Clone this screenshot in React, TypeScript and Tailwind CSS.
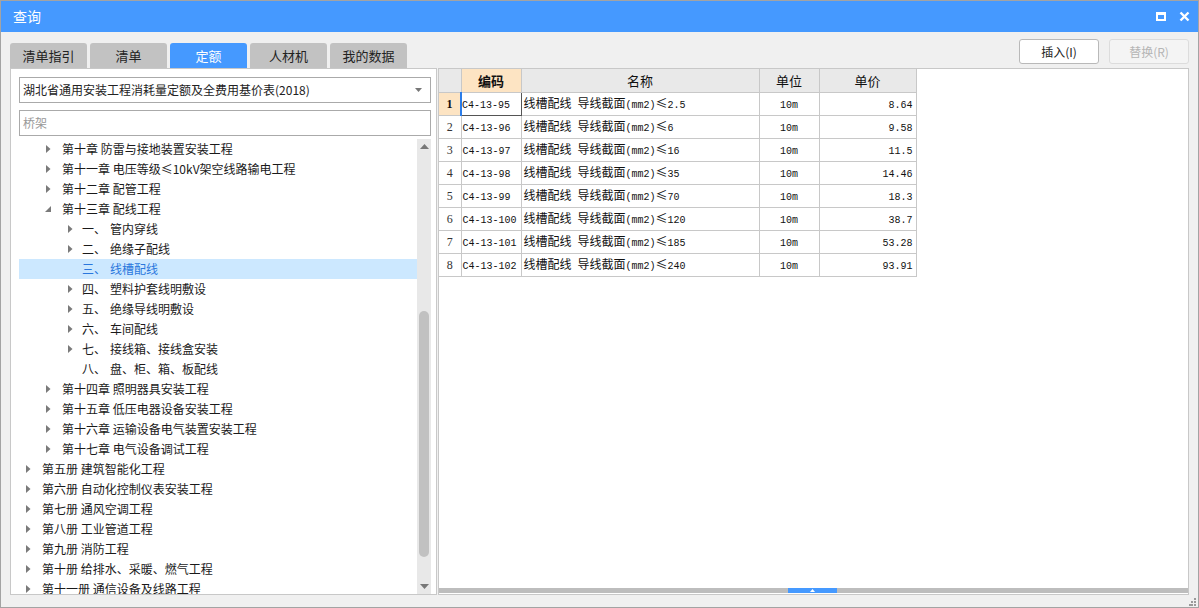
import React from "react";

type Node = { level: number; text: string; sub?: string; arrow?: "right" | "down"; selected?: boolean };

const tree: Node[] = [
  { level: 1, text: "第十章 防雷与接地装置安装工程", arrow: "right" },
  { level: 1, text: "第十一章 电压等级≤10kV架空线路输电工程", arrow: "right" },
  { level: 1, text: "第十二章 配管工程", arrow: "right" },
  { level: 1, text: "第十三章 配线工程", arrow: "down" },
  { level: 2, text: "一、", sub: "管内穿线", arrow: "right" },
  { level: 2, text: "二、", sub: "绝缘子配线", arrow: "right" },
  { level: 2, text: "三、", sub: "线槽配线", selected: true },
  { level: 2, text: "四、", sub: "塑料护套线明敷设", arrow: "right" },
  { level: 2, text: "五、", sub: "绝缘导线明敷设", arrow: "right" },
  { level: 2, text: "六、", sub: "车间配线", arrow: "right" },
  { level: 2, text: "七、", sub: "接线箱、接线盒安装", arrow: "right" },
  { level: 2, text: "八、", sub: "盘、柜、箱、板配线" },
  { level: 1, text: "第十四章 照明器具安装工程", arrow: "right" },
  { level: 1, text: "第十五章 低压电器设备安装工程", arrow: "right" },
  { level: 1, text: "第十六章 运输设备电气装置安装工程", arrow: "right" },
  { level: 1, text: "第十七章 电气设备调试工程", arrow: "right" },
  { level: 0, text: "第五册 建筑智能化工程", arrow: "right" },
  { level: 0, text: "第六册 自动化控制仪表安装工程", arrow: "right" },
  { level: 0, text: "第七册 通风空调工程", arrow: "right" },
  { level: 0, text: "第八册 工业管道工程", arrow: "right" },
  { level: 0, text: "第九册 消防工程", arrow: "right" },
  { level: 0, text: "第十册 给排水、采暖、燃气工程", arrow: "right" },
  { level: 0, text: "第十一册 通信设备及线路工程", arrow: "right" },
];

const rows = [
  ["C4-13-95", "2.5", "8.64"],
  ["C4-13-96", "6", "9.58"],
  ["C4-13-97", "16", "11.5"],
  ["C4-13-98", "35", "14.46"],
  ["C4-13-99", "70", "18.3"],
  ["C4-13-100", "120", "38.7"],
  ["C4-13-101", "185", "53.28"],
  ["C4-13-102", "240", "93.91"],
];

const tabs = ["清单指引", "清单", "定额", "人材机", "我的数据"];

const ui = { fontFamily: '"Noto Sans CJK SC", "Noto Sans", sans-serif' };
const cjk = { fontFamily: '"Noto Sans CJK SC", sans-serif' };
const mono = { fontFamily: '"Liberation Mono", monospace' };

// SimSun-like mix: ascii half width, CJK full width
const Mixed = ({ text }: { text: string }) => {
  const parts = text.match(/[\x00-\x7f]+|[^\x00-\x7f]+/g) || [];
  return (
    <>
      {parts.map((p, i) =>
        /^[\x00-\x7f]+$/.test(p) ? (
          <span key={i} style={mono} className="text-[10px] text-[#111]">{p.replace(/ /g, "\u00a0")}</span>
        ) : (
          <span key={i} style={cjk} className="text-[12px] text-[#111]">{p}</span>
        )
      )}
    </>
  );
};

const Arrow = ({ dir }: { dir?: "right" | "down" }) => {
  if (dir === "right")
    return (
      <svg width="5" height="8" viewBox="0 0 5 8"><path d="M0 0 L4.5 4 L0 8 Z" fill="#7a7a7a" /></svg>
    );
  if (dir === "down")
    return (
      <svg width="6" height="6" viewBox="0 0 6 6"><path d="M6 0 L6 6 L0 6 Z" fill="#7a7a7a" /></svg>
    );
  return <span className="w-[5px]" />;
};

export default function App() {
  return (
    <div style={ui} className="w-[1199px] h-[608px] border border-[#a3a3a3] bg-[#f0f0f0] flex flex-col relative overflow-hidden">
      <div className="h-[31px] bg-[#4599ff] flex items-center justify-between pl-[12px] pr-[8px] text-white">
        <span className="text-[14px]">查询</span>
        <div className="flex items-center gap-[13px]">
          <div className="w-[10px] h-[9px] border-[2px] border-t-[3px] border-white" />
          <svg width="11" height="11" viewBox="0 0 11 11">
            <path d="M1.5 1.5 L9.5 9.5 M9.5 1.5 L1.5 9.5" stroke="white" strokeWidth="2.4" />
          </svg>
        </div>
      </div>

      <div className="flex items-start justify-between h-[36px] px-[9px]">
        <div className="flex gap-[3px] mt-[11px]">
          {tabs.map((t) => (
            <div
              key={t}
              className={
                t === "定额"
                  ? "w-[77px] h-[25px] rounded-t-[3px] bg-[#4599ff] text-white text-[13px] flex items-center justify-center"
                  : "w-[77px] h-[25px] rounded-t-[3px] bg-[#c2c2c2] text-[#222] text-[13px] flex items-center justify-center"
              }
            >
              {t}
            </div>
          ))}
        </div>
        <div className="flex gap-[10px] mt-[7px]">
          <div className="w-[80px] h-[25px] rounded-[3px] border border-[#b9b9b9] bg-white text-[12px] text-[#222] flex items-center justify-center">
            插入(I)
          </div>
          <div className="w-[80px] h-[25px] rounded-[3px] border border-[#dcdcdc] bg-[#f4f4f4] text-[12px] text-[#b5b5b5] flex items-center justify-center">
            替换(R)
          </div>
        </div>
      </div>

      <div className="flex h-[527px] px-[9px] gap-[1px]">
        <div className="w-[427px] border border-[#c8c8c8] bg-white flex flex-col pt-[8px] pl-[8px] pr-[5px]">
          <div className="h-[26px] border border-[#aaaaaa] flex items-center justify-between pl-[3px] pr-[8px] text-[12px] text-[#222]">
            <span>湖北省通用安装工程消耗量定额及全费用基价表(2018)</span>
            <svg width="7" height="4" viewBox="0 0 7 4"><path d="M0 0 L7 0 L3.5 4 Z" fill="#777" /></svg>
          </div>
          <div className="h-[26px] border border-[#aaaaaa] mt-[7px] flex items-center pl-[3px] text-[12px] text-[#999]">
            桥架
          </div>
          <div className="flex flex-1 mt-[3px] min-h-0 overflow-hidden">
            <div className="flex-1 overflow-hidden">
              {tree.map((n, i) => (
                <div
                  key={i}
                  className={
                    n.selected
                      ? "h-[20px] flex items-center bg-[#cce8ff] text-[#2a77dd] text-[12px]"
                      : "h-[20px] flex items-center text-[#1a1a1a] text-[12px]"
                  }
                >
                  <div
                    className={
                      n.level === 0
                        ? "w-[23px] flex justify-end pr-[11px]"
                        : n.level === 1
                        ? "w-[43px] flex justify-end pr-[11px]"
                        : "w-[63px] flex justify-end pr-[9px]"
                    }
                  >
                    <Arrow dir={n.arrow} />
                  </div>
                  <span className="whitespace-nowrap">{n.text}</span>
                  {n.sub && <span className="whitespace-nowrap ml-[4px]">{n.sub}</span>}
                </div>
              ))}
            </div>
            <div className="w-[14px] bg-[#e8e8e8] flex flex-col items-center py-[5px]">
              <svg width="9" height="5" viewBox="0 0 9 5"><path d="M0 5 L4.5 0 L9 5 Z" fill="#777" /></svg>
              <div className="h-[162px]" />
              <div className="w-[10px] h-[246px] rounded-full bg-[#c1c1c1]" />
              <div className="flex-1" />
              <svg width="9" height="5" viewBox="0 0 9 5"><path d="M0 0 L9 0 L4.5 5 Z" fill="#777" /></svg>
            </div>
          </div>
        </div>

        <div className="flex-1 border border-[#c8c8c8] bg-white flex flex-col">
          <table className="border-collapse text-[#111] w-[477px] table-fixed">
            <colgroup>
              <col className="w-[22px]" />
              <col className="w-[60px]" />
              <col className="w-[238px]" />
              <col className="w-[60px]" />
              <col className="w-[97px]" />
            </colgroup>
            <thead>
              <tr className="h-[23px] bg-[#e9e9e9] text-[13px]">
                <th className="border border-[#c8c8c8] border-t-0 border-l-0 font-normal" />
                <th className="border border-[#c8c8c8] border-t-0 bg-[#fde4c3] font-bold">编码</th>
                <th className="border border-[#c8c8c8] border-t-0 font-normal">名称</th>
                <th className="border border-[#c8c8c8] border-t-0 font-normal">单位</th>
                <th className="border border-[#c8c8c8] border-t-0 font-normal">单价</th>
              </tr>
            </thead>
            <tbody>
              {rows.map((r, i) => (
                <tr key={r[0]} className="h-[23px]">
                  <td
                    style={{ fontFamily: '"Liberation Serif", serif' }}
                    className={
                      i === 0
                        ? "border border-[#c8c8c8] border-l-0 bg-[#fde4c3] text-center text-[12px] font-bold"
                        : "border border-[#c8c8c8] border-l-0 text-center text-[12px] text-[#333]"
                    }
                  >
                    {i + 1}
                  </td>
                  <td
                    className={
                      i === 0
                        ? "border border-[#c8c8c8] border-l-2 border-l-[#2b7de9] border-r-[#555] border-b-[#555] pl-[0px] pb-[3px] whitespace-nowrap leading-none"
                        : "border border-[#c8c8c8] pl-[1px] pb-[3px] whitespace-nowrap leading-none"
                    }
                  >
                    <Mixed text={r[0]} />
                  </td>
                  <td className="border border-[#c8c8c8] pl-[2px] pb-[3px] whitespace-nowrap leading-none">
                    <Mixed text={"线槽配线 导线截面(mm2)≤" + r[1]} />
                  </td>
                  <td className="border border-[#c8c8c8] text-center pb-[3px] leading-none">
                    <Mixed text="10m" />
                  </td>
                  <td className="border border-[#c8c8c8] text-right pr-[3px] pb-[3px] leading-none">
                    <Mixed text={r[2]} />
                  </td>
                </tr>
              ))}
            </tbody>
          </table>
          <div className="flex-1" />
          <div className="h-[5px] bg-[#bdbdbd] flex mb-[1px]">
            <div className="w-[349px]" />
            <div className="w-[49px] bg-[#4599ff] flex items-center justify-center">
              <svg width="5" height="3" viewBox="0 0 5 3"><path d="M0 3 L2.5 0 L5 3 Z" fill="white" /></svg>
            </div>
          </div>
        </div>
      </div>

      <svg className="absolute right-[1px] bottom-[1px]" width="8" height="8" viewBox="0 0 8 8">
        <rect x="5" y="0" width="2" height="2" fill="#9a9a9a" />
        <rect x="2" y="3" width="2" height="2" fill="#9a9a9a" />
        <rect x="5" y="3" width="2" height="2" fill="#9a9a9a" />
        <rect x="0" y="6" width="2" height="2" fill="#9a9a9a" />
        <rect x="2" y="6" width="2" height="2" fill="#9a9a9a" />
        <rect x="5" y="6" width="2" height="2" fill="#9a9a9a" />
      </svg>
    </div>
  );
}
